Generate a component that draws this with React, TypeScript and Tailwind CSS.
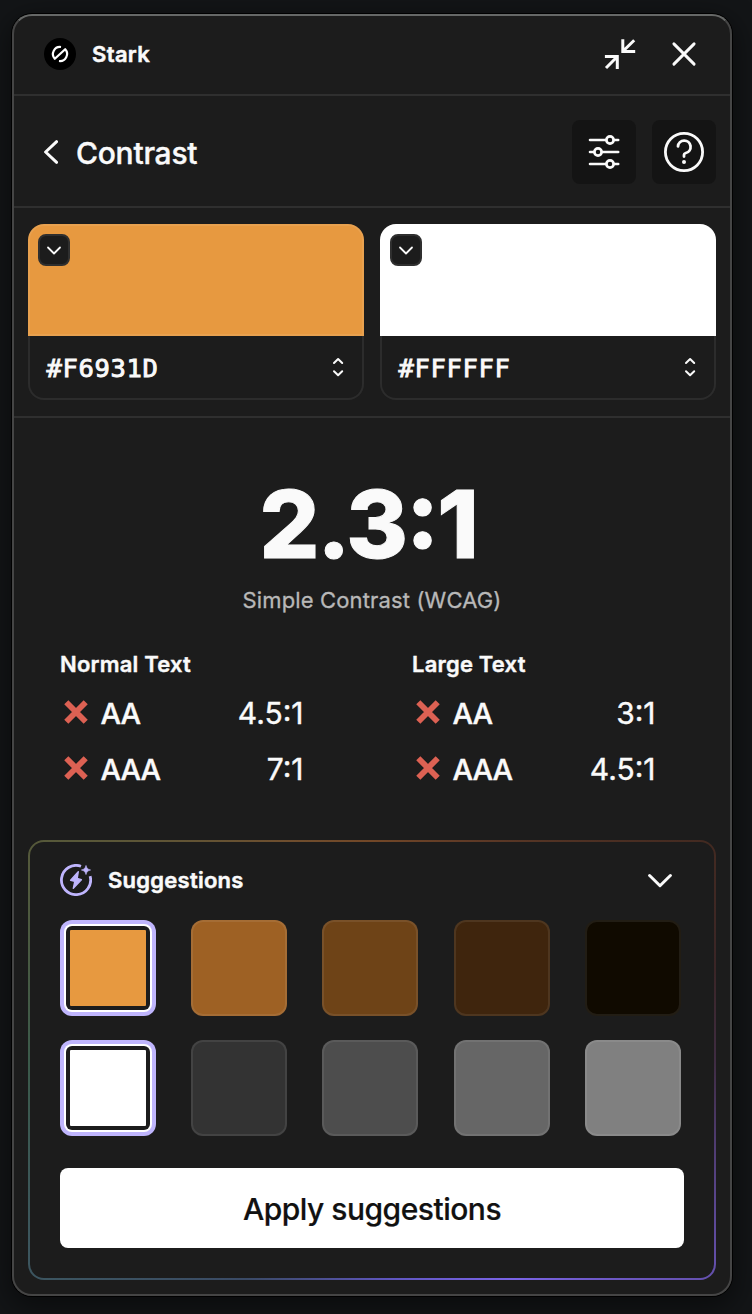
import type { ReactNode } from "react";

function Logo() {
  return (
    <svg className="size-8" viewBox="0 0 32 32" fill="none">
      <circle cx="16" cy="16" r="16" fill="#000" />
      <path
        d="M17 9A7.1 7.1 0 0 0 10.8 20.8L21.2 11.2A7.1 7.1 0 0 1 15 23"
        stroke="#fff"
        strokeWidth="2.2"
        strokeLinejoin="round"
      />
    </svg>
  );
}

function CollapseIcon() {
  return (
    <svg className="size-8" viewBox="0 0 32 32" fill="none" stroke="#fafafa" strokeWidth="3">
      <path d="M18.8 1.3V13.4H31.2M19.2 13L30.2 2.2" />
      <path d="M0.9 18.6H13.3V31M12.9 19L2 30" />
    </svg>
  );
}

function CloseIcon() {
  return (
    <svg className="size-8" viewBox="0 0 32 32" fill="none" stroke="#fafafa" strokeWidth="2.9" strokeLinecap="round">
      <path d="M5.9 5.9L26.1 26.1M26.1 5.9L5.9 26.1" />
    </svg>
  );
}

function SlidersIcon() {
  return (
    <svg className="size-10" viewBox="0 0 40 40" fill="none" stroke="#fafafa" strokeWidth="2.6" strokeLinecap="round">
      <path d="M6 8H34.2M6 20H34.2M6 32H34.2" />
      <g fill="#141414" strokeWidth="2.7">
        <circle cx="26" cy="8" r="3.6" />
        <circle cx="14" cy="20" r="3.6" />
        <circle cx="26" cy="32" r="3.6" />
      </g>
    </svg>
  );
}

function HelpIcon() {
  return (
    <svg className="size-10" viewBox="0 0 40 40" fill="none" stroke="#fafafa" strokeWidth="2.8" strokeLinecap="round">
      <circle cx="20" cy="20" r="18.6" />
      <path d="M14 14.4A6.3 6.3 0 1 1 21.8 21C20.6 21.4 20 21.8 20 22.8V24.6" />
      <circle cx="20" cy="30" r="2" fill="#fafafa" stroke="none" />
    </svg>
  );
}

function CrossIcon() {
  return (
    <svg className="size-8 shrink-0" viewBox="0 0 32 32" stroke="#dd6153" strokeWidth="5.8">
      <path d="M6.3 6.3L25.7 25.7M25.7 6.3L6.3 25.7" />
    </svg>
  );
}

function SuggestIcon() {
  return (
    <svg className="size-8" viewBox="0 0 32 32" fill="none" strokeLinejoin="round" strokeLinecap="butt">
      <path d="M21 2.3A14.6 14.6 0 1 0 30.1 12.1" stroke="#bfb5fd" strokeWidth="2.8" />
      <path
        d="M18.3 7.6L10.6 16.3L14.8 17.4L13.3 24.3L21.4 15.7L17.2 14.5Z"
        fill="#bfb5fd"
        stroke="#bfb5fd"
        strokeWidth="1.4"
      />
      <path d="M26 1.4C26.7 4.2 27.8 5.3 30.6 6C27.8 6.7 26.7 7.8 26 10.6C25.3 7.8 24.2 6.7 21.4 6C24.2 5.3 25.3 4.2 26 1.4Z" fill="#bfb5fd" stroke="#bfb5fd" strokeWidth="0.6" />
    </svg>
  );
}

function IconButton({ children, label }: { children: ReactNode; label: string }) {
  return (
    <button aria-label={label} className="flex size-16 items-center justify-center rounded-lg bg-[#141414]">
      {children}
    </button>
  );
}

function ColorCard({ swatch, hex }: { swatch: string; hex: string }) {
  return (
    <div className="flex flex-1 flex-col">
      <div className={`h-28 rounded-t-2xl border-2 border-white/8 p-2 ${swatch}`}>
        <button className="flex size-8 items-center justify-center rounded-lg border-2 border-[#2f2f2f] bg-[#1c1c1c]">
          <svg className="h-3 w-4 shrink-0" viewBox="0 0 16 12" fill="none" stroke="#fafafa" strokeWidth="1.8" strokeLinecap="round" strokeLinejoin="round">
            <path d="M2 3.5L8 9.5L14 3.5" />
          </svg>
        </button>
      </div>
      <div className="flex h-16 items-center justify-between rounded-b-2xl border-2 border-t-0 border-[#2c2c2c] pr-4 pl-4">
        <span className="pt-px pl-[0.5px] font-['DejaVu_Sans_Mono',monospace] text-[25.5px] leading-8 tracking-[0.65px] text-[#fafafa] [-webkit-text-stroke:0.9px_#fafafa]">
          {hex}
        </span>
        <svg className="h-5 w-4" viewBox="0 0 16 20" fill="none" stroke="#fafafa" strokeWidth="2" strokeLinecap="round" strokeLinejoin="round">
          <path d="M4 6L8.1 2L12.2 6M4 14.2L8.1 18.2L12.2 14.2" />
        </svg>
      </div>
    </div>
  );
}

type Check = { level: string; ratio: string };

function Results({ title, checks }: { title: string; checks: Check[] }) {
  return (
    <div className="flex w-[243.5px] flex-col">
      <h3 className="text-[22px] leading-8 font-semibold tracking-[0.2px] [-webkit-text-stroke:0.4px_#fafafa]">{title}</h3>
      <div className="mt-[5px] flex flex-col">
        {checks.map((c) => (
          <div key={c.level} className="flex h-14 items-center">
            <div className="-mt-0.5">
              <CrossIcon />
            </div>
            <span className="ml-[8.5px] pt-px text-[29px] font-medium tracking-[-1px] [-webkit-text-stroke:0.4px_#fafafa]">{c.level}</span>
            <span className="ml-auto text-[30px] [-webkit-text-stroke:0.4px_#fafafa] [font-feature-settings:'case']">{c.ratio}</span>
          </div>
        ))}
      </div>
    </div>
  );
}

function Swatches({ selected, others }: { selected: string; others: string[] }) {
  return (
    <div className="flex w-[620.8px] justify-between">
      <div className="size-24 rounded-xl bg-[#bfb5fd] p-1">
        <div className="size-full rounded-lg bg-white p-0.5">
          <div className="size-full rounded-md bg-[#1c1c1c] p-1">
            <div className={`size-full rounded-[1px] ${selected}`} />
          </div>
        </div>
      </div>
      {others.map((c) => (
        <div key={c} className={`size-24 rounded-xl border-2 border-white/8 ${c}`} />
      ))}
    </div>
  );
}

export default function App() {
  return (
    <div className="h-[1314px] w-[752px] overflow-hidden bg-[#131517] px-3 pt-3.5 font-['Inter',sans-serif] text-[#fafafa]">
      <main className="relative flex h-[1282px] w-[720px] flex-col rounded-[20px] bg-[#1c1c1c] shadow-[0_0_0_1px_#000,0_8px_28px_4px_rgba(0,0,0,0.45)]">
        <header className="flex h-[82px] items-center justify-between border-b-2 border-[#2f2f2f] px-8">
          <div className="flex items-center gap-4">
            <Logo />
            <span className="text-[22px] font-semibold tracking-[0.35px] [-webkit-text-stroke:0.5px_#fafafa]">Stark</span>
          </div>
          <div className="flex items-center gap-8">
            <CollapseIcon />
            <CloseIcon />
          </div>
        </header>

        <div className="flex h-28 items-center justify-between border-b-2 border-[#2f2f2f] pt-0.5 pr-4 pl-8">
          <div className="flex items-center gap-[18px]">
            <svg className="-mt-px h-6 w-3.5" viewBox="0 0 14 24" fill="none" stroke="#fafafa" strokeWidth="3" strokeLinecap="round" strokeLinejoin="round">
              <path d="M12.6 1.7L1.6 12L12.6 22.3" />
            </svg>
            <h1 className="pt-px text-[30px] leading-10 font-medium tracking-[-0.25px] [-webkit-text-stroke:0.4px_#fafafa]">Contrast</h1>
          </div>
          <div className="flex gap-4">
            <IconButton label="Settings">
              <SlidersIcon />
            </IconButton>
            <IconButton label="Help">
              <HelpIcon />
            </IconButton>
          </div>
        </div>

        <section className="flex h-[210px] gap-4 border-b-2 border-[#2f2f2f] px-4 pt-4">
          <ColorCard swatch="bg-[#e79940]" hex="#F6931D" />
          <ColorCard swatch="bg-white" hex="#FFFFFF" />
        </section>

        <section className="flex h-[422px] flex-col pt-[57px]">
          <div className="pr-[8px] text-center text-[94px] leading-[98px] font-extrabold tracking-[-2.05px] [-webkit-text-stroke:1px_#fafafa] [font-feature-settings:'case']">2.3:1</div>
          <p className="mt-[11px] text-center text-[22px] leading-8 tracking-[0.14px] text-[#b8b8b8] [-webkit-text-stroke:0.3px_#b8b8b8]">Simple Contrast (WCAG)</p>
          <div className="mt-8 flex gap-[108.5px] pl-12">
            <Results
              title="Normal Text"
              checks={[
                { level: "AA", ratio: "4.5:1" },
                { level: "AAA", ratio: "7:1" },
              ]}
            />
            <Results
              title="Large Text"
              checks={[
                { level: "AA", ratio: "3:1" },
                { level: "AAA", ratio: "4.5:1" },
              ]}
            />
          </div>
        </section>

        <section className="mx-4 h-[440px] rounded-2xl bg-[conic-gradient(#724727_0deg,#5f3a26_24deg,#432a21_57deg,#3a2526_75deg,#3f2c42_90deg,#6450ad_122deg,#7a64e6_147deg,#5f56c0_175deg,#3a4a66_210deg,#3c5560_237deg,#3b5a4a_270deg,#56593a_303deg,#6f4e2e_339deg,#724727_360deg)] p-0.5">
          <div className="flex h-full flex-col rounded-[14px] bg-[#1c1c1c] px-[30px] pt-[22px]">
            <div className="flex h-8 items-center">
              <SuggestIcon />
              <h2 className="ml-4 text-[22px] font-semibold tracking-[0.25px] [-webkit-text-stroke:0.5px_#fafafa]">Suggestions</h2>
              <svg className="mr-3 ml-auto h-4 w-6" viewBox="0 0 24 16" fill="none" stroke="#fafafa" strokeWidth="3" strokeLinecap="round" strokeLinejoin="round">
                <path d="M1.6 3.5L12 13.7L22.4 3.5" />
              </svg>
            </div>
            <div className="mt-6 flex flex-col gap-6">
              <Swatches selected="bg-[#e79940]" others={["bg-[#9e6124]", "bg-[#6e4317]", "bg-[#3f250d]", "bg-[#100a00]"]} />
              <Swatches selected="bg-white" others={["bg-[#333333]", "bg-[#4d4d4d]", "bg-[#666666]", "bg-[#808080]"]} />
            </div>
            <button className="mt-8 h-20 w-[624px] rounded-lg bg-white pt-0.5 text-[30px] font-medium tracking-[-0.5px] text-[#111] [-webkit-text-stroke:0.2px_#111]">
              Apply suggestions
            </button>
          </div>
        </section>

        <div className="pointer-events-none absolute inset-0 rounded-[20px] border-2 border-[#454545] border-t-[#666867]" />
      </main>
    </div>
  );
}
